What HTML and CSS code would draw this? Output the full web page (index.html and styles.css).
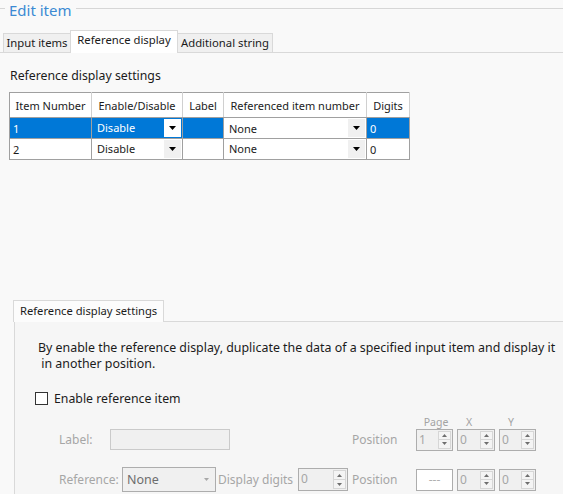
FILE: index.html
```html
<!DOCTYPE html>
<html>
<head>
<meta charset="utf-8">
<title>Edit item</title>
<link rel="stylesheet" href="styles.css">
</head>
<body>
<div class="title-row"><span class="line-l"></span><span class="title">Edit item</span><span class="line-r"></span></div>
<div class="tabs">
  <div class="tab t1">Input items</div>
  <div class="tab t2 active">Reference display</div>
  <div class="tab t3">Additional string</div>
</div>
<div class="panel">
  <div class="section-label">Reference display settings</div>
  <table class="grid">
    <colgroup><col class="c1"><col class="c2"><col class="c3"><col class="c4"><col class="c5"></colgroup>
    <thead>
      <tr><th>Item Number</th><th>Enable/Disable</th><th>Label</th><th>Referenced item number</th><th>Digits</th></tr>
    </thead>
    <tbody>
      <tr class="sel">
        <td class="num">1</td>
        <td class="cb"><div class="combo"><span class="ct">Disable</span><span class="cbtn white"><svg width="7" height="4" viewBox="0 0 7 4"><path d="M0 0h7L3.5 4z" fill="#000"/></svg></span></div></td>
        <td></td>
        <td class="cb edit"><div class="combo"><span class="ct">None</span><span class="cbtn"><svg width="7" height="4" viewBox="0 0 7 4"><path d="M0 0h7L3.5 4z" fill="#000"/></svg></span></div></td>
        <td class="num">0</td>
      </tr>
      <tr>
        <td class="num">2</td>
        <td class="cb"><div class="combo"><span class="ct">Disable</span><span class="cbtn"><svg width="7" height="4" viewBox="0 0 7 4"><path d="M0 0h7L3.5 4z" fill="#000"/></svg></span></div></td>
        <td></td>
        <td class="cb"><div class="combo"><span class="ct">None</span><span class="cbtn"><svg width="7" height="4" viewBox="0 0 7 4"><path d="M0 0h7L3.5 4z" fill="#000"/></svg></span></div></td>
        <td class="num">0</td>
      </tr>
    </tbody>
  </table>

  <div class="lower">
    <div class="ltabs"><div class="ltab">Reference display settings</div></div>
    <div class="lpanel">
      <p class="desc">By enable the reference display, duplicate the data of a specified input item and display it<br>&nbsp;in another position.</p>
      <div class="check"><span class="box"></span><span>Enable reference item</span></div>
      <div class="captions"><span class="cap cp1">Page</span><span class="cap cp2">X</span><span class="cap cp3">Y</span></div>
      <div class="frow r1">
        <span class="lbl w-label">Label:</span>
        <span class="textbox"></span>
        <span class="lbl w-pos pos1">Position</span>
        <div class="spin s-a"><span class="val">1</span><span class="btns"><span class="sb"><svg width="5" height="3" viewBox="0 0 5 3"><path d="M0 3h5L2.5 0z" fill="#6e6e6e"/></svg></span><span class="sb"><svg width="5" height="3" viewBox="0 0 5 3"><path d="M0 0h5L2.5 3z" fill="#6e6e6e"/></svg></span></span></div>
        <div class="spin s-b"><span class="val">0</span><span class="btns"><span class="sb"><svg width="5" height="3" viewBox="0 0 5 3"><path d="M0 3h5L2.5 0z" fill="#6e6e6e"/></svg></span><span class="sb"><svg width="5" height="3" viewBox="0 0 5 3"><path d="M0 0h5L2.5 3z" fill="#6e6e6e"/></svg></span></span></div>
        <div class="spin s-c"><span class="val">0</span><span class="btns"><span class="sb"><svg width="5" height="3" viewBox="0 0 5 3"><path d="M0 3h5L2.5 0z" fill="#6e6e6e"/></svg></span><span class="sb"><svg width="5" height="3" viewBox="0 0 5 3"><path d="M0 0h5L2.5 3z" fill="#6e6e6e"/></svg></span></span></div>
      </div>
      <div class="frow r2">
        <span class="lbl w-ref">Reference:</span>
        <div class="dcombo"><span class="dct">None</span><svg class="darrow" width="5" height="3" viewBox="0 0 5 3"><path d="M0 0h5L2.5 3z" fill="#a8a8a8"/></svg></div>
        <span class="lbl w-dig">Display digits</span>
        <div class="spin s-d"><span class="val">0</span><span class="btns"><span class="sb"><svg width="5" height="3" viewBox="0 0 5 3"><path d="M0 3h5L2.5 0z" fill="#6e6e6e"/></svg></span><span class="sb"><svg width="5" height="3" viewBox="0 0 5 3"><path d="M0 0h5L2.5 3z" fill="#6e6e6e"/></svg></span></span></div>
        <span class="lbl w-pos pos2">Position</span>
        <span class="dash">---</span>
        <div class="spin s-b"><span class="val">0</span><span class="btns"><span class="sb"><svg width="5" height="3" viewBox="0 0 5 3"><path d="M0 3h5L2.5 0z" fill="#6e6e6e"/></svg></span><span class="sb"><svg width="5" height="3" viewBox="0 0 5 3"><path d="M0 0h5L2.5 3z" fill="#6e6e6e"/></svg></span></span></div>
        <div class="spin s-c"><span class="val">0</span><span class="btns"><span class="sb"><svg width="5" height="3" viewBox="0 0 5 3"><path d="M0 3h5L2.5 0z" fill="#6e6e6e"/></svg></span><span class="sb"><svg width="5" height="3" viewBox="0 0 5 3"><path d="M0 0h5L2.5 3z" fill="#6e6e6e"/></svg></span></span></div>
      </div>
    </div>
  </div>
</div>
</body>
</html>
```

FILE: styles.css
```css
* { box-sizing: border-box; }
html, body { margin: 0; padding: 0; }
body {
  background: #f9f9f9;
  font-family: "Noto Sans", "Open Sans", sans-serif;
  font-size: 12.3px;
  color: #1b1b1b;
  width: 563px;
  height: 494px;
  overflow: hidden;
}

/* title */
.title-row { display: flex; height: 20px; }
.line-l { width: 5px; height: 1px; background: #d6d6d6; margin-top: 8px; }
.line-r { flex: 1; height: 1px; background: #d6d6d6; margin-top: 8px; }
.title { font-size: 15px; line-height: 20px; color: #3b8ad3; margin: 0 4px; white-space: nowrap; }

/* tabs */
.tabs {
  display: flex;
  align-items: flex-end;
  margin-top: 10px;
  height: 23px;
  border-bottom: 1px solid #d9d9d9;
  padding-left: 3px;
  font-size: 11.3px;
}
.tab {
  height: 19px;
  border: 1px solid #d9d9d9;
  border-bottom: none;
  background: #f0f0f0;
  line-height: 18px;
  text-align: center;
  white-space: nowrap;
}
.tab + .tab { margin-left: -1px; }
.tab.active { height: 23px; background: #ffffff; margin-bottom: -1px; position: relative; }
.t1 { width: 68px; }
.t2 { width: 108px; }
.t3 { width: 96px; }

/* panel */
.panel { padding: 15px 0 0 9px; }
.section-label { line-height: 16px; padding-left: 1px; }

.grid {
  margin-top: 8px;
  border-collapse: collapse;
  table-layout: fixed;
  width: 400px;
  border: 1px solid #a0a0a0;
  background: #ffffff;
  font-size: 11px;
}
.c1 { width: 82px; }
.c2 { width: 91px; }
.c3 { width: 41px; }
.c4 { width: 143px; }
.c5 { width: 43px; }
.grid th {
  font-weight: normal;
  height: 25px;
  padding: 0;
  text-align: center;
  border-right: 1px solid #d0d0d0;
  border-bottom: 1px solid #a0a0a0;
  white-space: nowrap;
}
.grid td {
  height: 21px;
  padding: 0;
  border: 1px solid #a0a0a0;
  white-space: nowrap;
}
.grid td.num { padding-left: 3px; }
.grid tr.sel td { background: #0078d7; color: #ffffff; }
.grid tr.sel td.edit { background: #ffffff; color: #1b1b1b; }
.combo { display: flex; height: 20px; align-items: stretch; padding: 1px 1px 1px 5px; }
.ct { flex: 1; line-height: 18px; }
.edit .ct { line-height: 20px; }
.cbtn {
  width: 17px;
  background: #f0f0f0;
  display: flex;
  align-items: center;
  justify-content: center;
}
.cbtn.white { background: #ffffff; }

/* lower */
.lower { margin-top: 140px; margin-left: 4px; }
.ltabs { display: flex; height: 22px; border-bottom: 1px solid #d9d9d9; }
.ltab {
  width: 151px;
  height: 22px;
  border: 1px solid #d9d9d9;
  border-bottom: none;
  background: #fcfcfc;
  line-height: 19px;
  padding-left: 6px;
  margin-bottom: -1px;
  position: relative;
  white-space: nowrap;
  font-size: 11.2px;
}
.lpanel {
  margin-left: 1px;
  border-left: 1px solid #d9d9d9;
  background: #f6f6f6;
  height: 172px;
  padding-top: 18px;
}
.desc { margin: 0; padding-left: 23px; line-height: 16px; white-space: nowrap; font-size: 12.4px; }
.check { display: flex; align-items: center; margin-top: 18px; padding-left: 20px; height: 16px; }
.box { width: 13px; height: 13px; border: 1px solid #333333; background: #ffffff; margin-right: 6px; }

.captions { display: flex; margin-top: 10px; padding-left: 401px; height: 12px; font-size: 10.5px; line-height: 12px; color: #a3a3a3; }
.cap { text-align: center; }
.cp1 { width: 40px; }
.cp2 { width: 26px; }
.cp3 { width: 58px; }

.frow { display: flex; align-items: center; padding-left: 44px; color: #a6a6a6; white-space: nowrap; font-size: 12px; }
.r1 { height: 23px; }
.r2 { height: 25px; margin-top: 16px; }
.lbl { flex: none; }
.w-label { width: 51px; }
.w-ref { width: 63px; }
.w-dig { width: 80px; margin-left: 2px; }
.w-pos { width: 64px; }
.pos1 { margin-left: 122px; }
.pos2 { margin-left: 4px; }

.textbox { width: 120px; height: 21px; background: #f0f0f0; border: 1px solid #cacaca; }

.spin { display: flex; height: 22px; border: 1px solid #adadad; background: #f0f0f0; flex: none; }
.s-a { width: 37px; }
.s-b { width: 38px; margin-left: 4px; }
.s-c { width: 37px; margin-left: 4px; }
.s-d { width: 50px; height: 23px; }
.val { flex: 1; padding-left: 2px; line-height: 19px; color: #a6a6a6; }
.btns { display: flex; flex-direction: column; width: 14px; padding: 1px 1px 1px 0; }
.sb { flex: 1; display: flex; align-items: center; justify-content: center; background: #f4f4f4; border: 1px solid #d6d6d6; }
.sb + .sb { border-top: none; }

.dcombo {
  display: flex;
  align-items: center;
  width: 94px;
  height: 25px;
  background: #f0f0f0;
  border: 1px solid #adadad;
  padding: 0 6px 0 4px;
  flex: none;
}
.dct { flex: 1; color: #6d6d6d; font-size: 12.5px; }

.dash {
  width: 37px;
  height: 22px;
  background: #ffffff;
  border: 1px solid #adadad;
  text-align: center;
  line-height: 20px;
  color: #b0b0b0;
  flex: none;
}
```
